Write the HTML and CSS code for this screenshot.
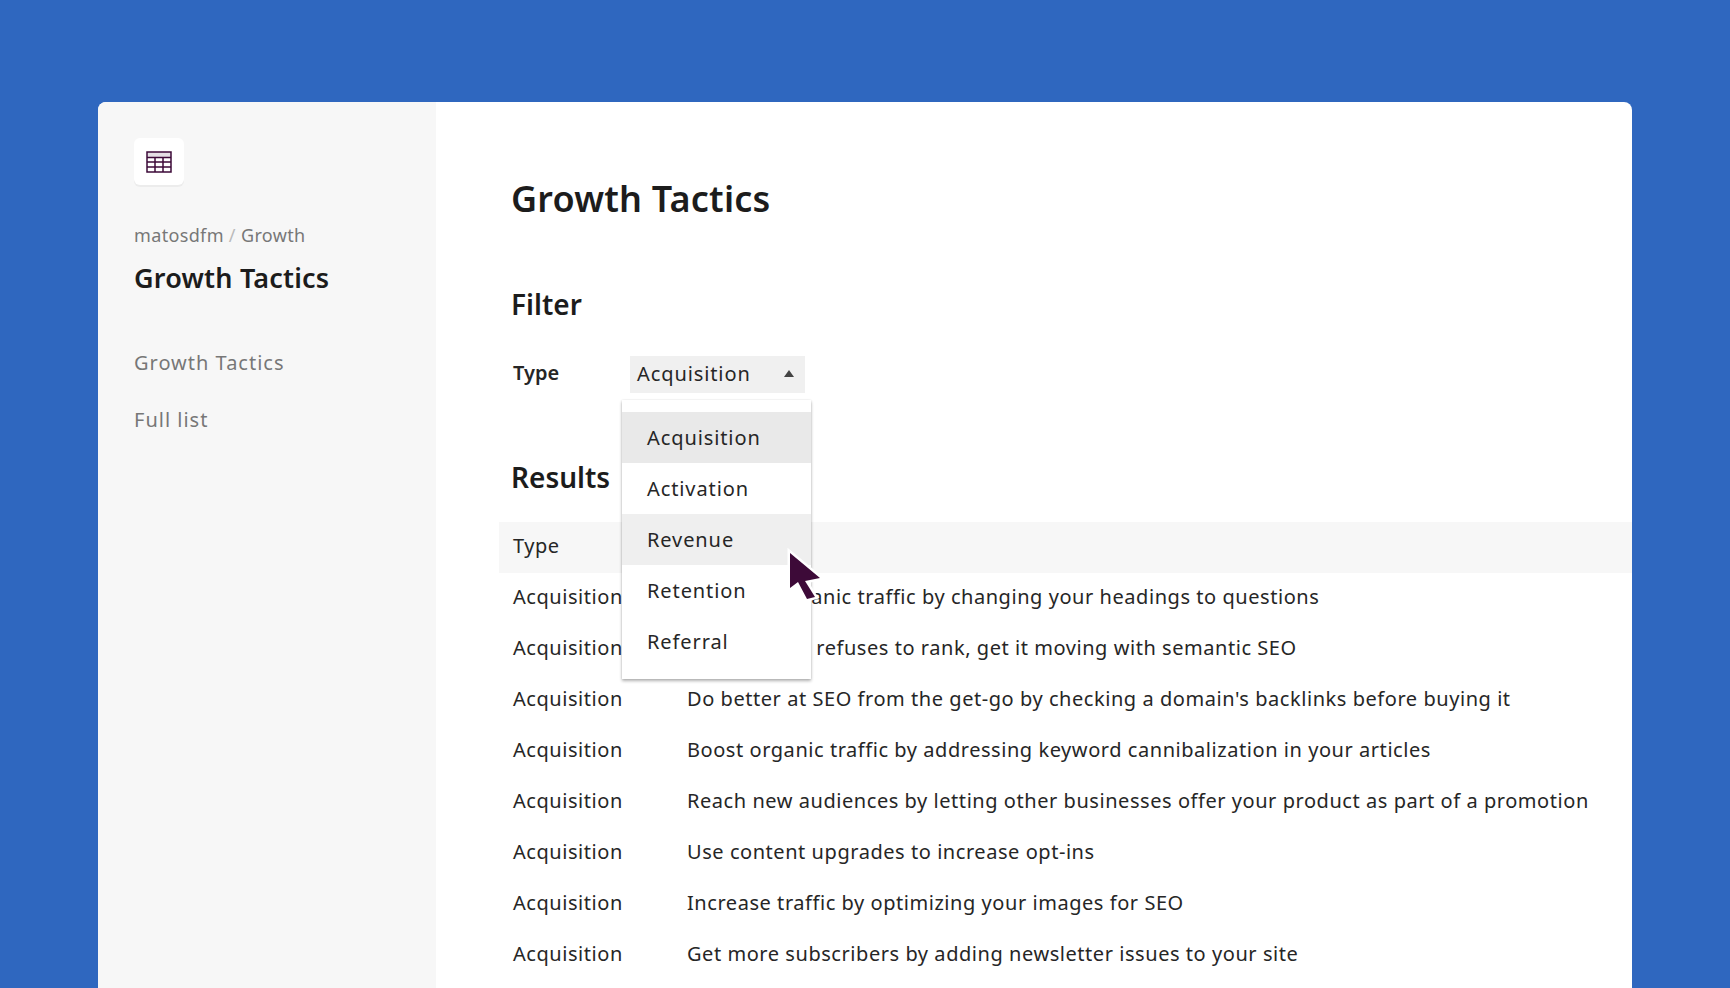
FILE: index.html
```html
<!DOCTYPE html>
<html lang="en">
<head>
	<meta charset="UTF-8">
	<title>Growth Tactics</title>
	<link rel="stylesheet" href="styles.css">
</head>
<body>
	<div class="app">
		<div class="side">
			<div class="logo">
				<svg width="26" height="22" viewBox="0 0 26 22">
					<rect x="1" y="1" width="24" height="20" fill="#fff"/>
					<rect x="1" y="1" width="24" height="5" fill="#e4dfe4"/>
					<path d="M1 1H25V21H1ZM1 6.500H25M1 11H25M1 16H25M9 6.500V21M17 6.500V21" fill="none" stroke="#3d0a38" stroke-width="1.500"/>
				</svg>
			</div>
			<div class="crumb">matosdfm <span class="slash">/</span> Growth</div>
			<div class="side-title">Growth Tactics</div>
			<ul class="nav">
				<li>Growth Tactics</li>
				<li>Full list</li>
			</ul>
		</div>
		<div class="main">
			<h1>Growth Tactics</h1>
			<h2 class="filter-head">Filter</h2>
			<div class="filter">
				<label>Type</label>
				<div class="select">
					<span>Acquisition</span>
					<i class="caret"></i>
				</div>
			</div>
			<h2 class="results-head">Results</h2>
			<div class="rows">
				<div class="row head"><span>Type</span><span></span></div>
				<div class="row"><span>Acquisition</span><span>Increase organic traffic by changing your headings to questions</span></div>
				<div class="row"><span>Acquisition</span><span>When a post refuses to rank, get it moving with semantic SEO</span></div>
				<div class="row"><span>Acquisition</span><span>Do better at SEO from the get-go by checking a domain's backlinks before buying it</span></div>
				<div class="row"><span>Acquisition</span><span>Boost organic traffic by addressing keyword cannibalization in your articles</span></div>
				<div class="row"><span>Acquisition</span><span>Reach new audiences by letting other businesses offer your product as part of a promotion</span></div>
				<div class="row"><span>Acquisition</span><span>Use content upgrades to increase opt-ins</span></div>
				<div class="row"><span>Acquisition</span><span>Increase traffic by optimizing your images for SEO</span></div>
				<div class="row"><span>Acquisition</span><span>Get more subscribers by adding newsletter issues to your site</span></div>
			</div>
			<ul class="menu">
				<li class="selected">Acquisition</li>
				<li>Activation</li>
				<li class="hover">Revenue</li>
				<li>Retention</li>
				<li>Referral</li>
			</ul>
			<svg class="cursor" width="48" height="64" viewBox="0 0 48 64">
				<path d="M9 8L39 33L24 36L34 52L26 54L17 37L9 43Z" fill="#3d0a38" stroke="#fff" stroke-width="5" stroke-linejoin="miter" stroke-miterlimit="4" paint-order="stroke"/>
			</svg>
		</div>
	</div>
</body>
</html>
```
FILE: styles.css
```css
*{
	margin: 0;
	padding: 0;
	box-sizing: border-box;
}
li{
	list-style: none;
}
html,body{
	height: 100%;
	overflow: hidden;
}
body{
	background-color: #2f67bf;
	font-family: "Noto Sans", "Liberation Sans", sans-serif;
	color: #262626;
	padding: 102px 98px 0;
}
.app{
	display: flex;
	height: 886px;
	background-color: #fff;
	border-radius: 8px 8px 0 0;
	overflow: hidden;
}
.side{
	width: 338px;
	flex-shrink: 0;
	background-color: #f7f7f7;
	padding: 36px 36px 0;
}
.logo{
	width: 50px;
	height: 47px;
	background-color: #fff;
	border-radius: 6px;
	box-shadow: 0 2px 0 #ececec;
	display: flex;
	align-items: center;
	justify-content: center;
}
.crumb{
	margin-top: 38px;
	font-size: 18px;
	line-height: 24px;
	color: #777;
	letter-spacing: .35px;
}
.slash{
	color: #bbb;
}
.side-title{
	margin-top: 13px;
	font-size: 27px;
	line-height: 36px;
	font-weight: 600;
	letter-spacing: .2px;
	color: #1c1c1c;
}
.nav{
	margin-top: 53px;
}
.nav li{
	font-size: 20px;
	line-height: 28px;
	height: 57px;
	color: #777;
	letter-spacing: 1px;
}
.main{
	flex: 1;
	position: relative;
	padding: 0 0 0 63px;
	min-width: 0;
}
h1{
	margin: 75px 0 0 12px;
	font-size: 36px;
	line-height: 44px;
	font-weight: 600;
	letter-spacing: .2px;
	color: #1c1c1c;
}
h2{
	font-size: 28px;
	line-height: 36px;
	font-weight: 600;
	color: #1c1c1c;
	margin-left: 12px;
}
.filter-head{
	margin-top: 65px;
}
.filter{
	display: flex;
	align-items: center;
	margin: 34px 0 0 14px;
}
.filter label{
	width: 117px;
	padding-bottom: 4px;
	font-size: 20px;
	font-weight: 600;
}
.select{
	width: 175px;
	height: 37px;
	background-color: #f0f0f0;
	display: flex;
	align-items: center;
	justify-content: space-between;
	padding: 0 11px 2px 7px;
	font-size: 20px;
	letter-spacing: .9px;
}
.caret{
	width: 0;
	height: 0;
	border-left: 5px solid transparent;
	border-right: 5px solid transparent;
	border-bottom: 7px solid #444;
}
.results-head{
	margin-top: 66px;
}
.rows{
	margin-top: 27px;
}
.row{
	display: flex;
	height: 51px;
	align-items: center;
	padding: 0 0 4px 14px;
	font-size: 20px;
	letter-spacing: .55px;
	white-space: nowrap;
}
.row span:first-child{
	width: 174px;
	flex-shrink: 0;
}
.row.head{
	background-color: #f7f7f7;
}
.menu{
	position: absolute;
	left: 186px;
	top: 298px;
	width: 189px;
	height: 279px;
	padding: 12px 0;
	background-color: #fff;
	box-shadow: 0 2px 3px rgba(0,0,0,.3), 0 0 2px rgba(0,0,0,.1);
}
.menu li{
	height: 51px;
	line-height: 51px;
	padding-left: 25px;
	font-size: 20px;
	letter-spacing: .9px;
}
.menu .selected{
	background-color: #e9e9e9;
}
.menu .hover{
	background-color: #efefef;
}
.cursor{
	position: absolute;
	left: 345px;
	top: 443px;
}
```
